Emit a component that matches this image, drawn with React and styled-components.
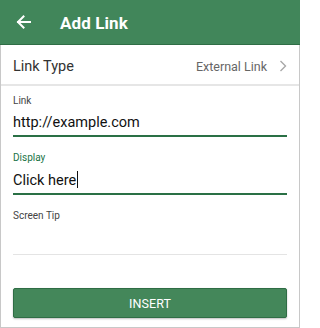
import React from 'react'
import styled, { createGlobalStyle } from 'styled-components'

const GlobalStyle = createGlobalStyle`
    html, body {
        margin: 0;
        padding: 0;
        background: #ffffff;
    }
    body {
        font-family: Roboto, "Liberation Sans", Arial, sans-serif;
    }
`

const Page = styled.div`
    width: 300px;
    height: 328px;
    display: flex;
    flex-direction: column;
`

const Header = styled.header`
    height: 44px;
    flex: none;
    display: flex;
    align-items: center;
    background: #41865a;
    border-bottom: 1px solid #2f6d45;
    color: #ffffff;
`

const BackButton = styled.button`
    width: 60px;
    height: 44px;
    padding: 0 0 0 16px;
    border: none;
    background: transparent;
    display: flex;
    align-items: center;
    cursor: pointer;
`

const Title = styled.h1`
    margin: 0;
    padding-top: 1px;
    font-size: 17px;
    font-weight: 700;
    letter-spacing: 0.1px;
`

const Body = styled.div`
    height: 282px;
    flex: none;
    border: 1px solid #c8c8c8;
    border-top: none;
    display: flex;
    flex-direction: column;
`

const TypeRow = styled.div`
    height: 41px;
    box-sizing: border-box;
    display: flex;
    align-items: center;
    padding: 3px 12px 0 12px;
    border-bottom: 2px solid #e6e6e6;
`

const TypeLabel = styled.span`
    flex: 1;
    font-size: 14.5px;
    color: #333333;
`

const TypeValue = styled.span`
    font-size: 12.5px;
    color: #666666;
    margin-right: 12px;
`

const Form = styled.div`
    padding: 9px 12px 0 12px;
    display: flex;
    flex-direction: column;
`

const Label = styled.div`
    font-size: 10px;
    line-height: 12px;
    height: 12px;
    color: ${p => (p.$active ? '#217346' : '#444444')};
    margin-top: ${p => (p.$first ? '0' : '15px')};
`

const Field = styled.div`
    padding-top: ${p => (p.$first ? '6px' : '7px')};
    padding-bottom: ${p => (p.$first ? '0' : '1px')};
    font-size: 14.5px;
    line-height: 20px;
    color: #111111;
    border-bottom: ${p => (p.$filled ? '2px solid #2a7045' : '1px solid #e4e4e4')};
    box-sizing: border-box;
    height: ${p => (p.$empty ? '33px' : p.$first ? '30px' : '31px')};
`

const Caret = styled.span`
    display: inline-block;
    width: 1px;
    height: 17px;
    background: #111111;
    vertical-align: -3px;
    margin-left: 1px;
`

const InsertButton = styled.button`
    margin: 33px 12px 0 12px;
    height: 30px;
    border: 1px solid #2f6d45;
    border-radius: 2px;
    background: #44875a;
    color: #ffffff;
    font-family: Roboto, "Liberation Sans", Arial, sans-serif;
    font-size: 12.5px;
    font-weight: 400;
    letter-spacing: 0.1px;
    box-shadow: 0 1px 2px rgba(0, 0, 0, 0.25);
    cursor: pointer;
`

function BackArrow() {
    return (
        <svg width="15" height="14" viewBox="0 0 15 14" fill="none">
            <path d="M14 7H2M7.5 1.5L2 7l5.5 5.5" stroke="#ffffff" strokeWidth="2" strokeLinecap="square" />
        </svg>
    )
}

function Chevron() {
    return (
        <svg width="8" height="12" viewBox="0 0 8 12" fill="none">
            <path d="M1.5 1l5 5-5 5" stroke="#a8a8a8" strokeWidth="1.4" />
        </svg>
    )
}

export default function App() {
    return (
        <Page>
            <GlobalStyle />
            <Header>
                <BackButton aria-label="Back">
                    <BackArrow />
                </BackButton>
                <Title>Add Link</Title>
            </Header>
            <Body>
                <TypeRow>
                    <TypeLabel>Link Type</TypeLabel>
                    <TypeValue>External Link</TypeValue>
                    <Chevron />
                </TypeRow>
                <Form>
                    <Label $first>Link</Label>
                    <Field $first $filled>http://example.com</Field>
                    <Label $active>Display</Label>
                    <Field $filled>Click here<Caret /></Field>
                    <Label>Screen Tip</Label>
                    <Field $empty></Field>
                </Form>
                <InsertButton>INSERT</InsertButton>
            </Body>
        </Page>
    )
}
